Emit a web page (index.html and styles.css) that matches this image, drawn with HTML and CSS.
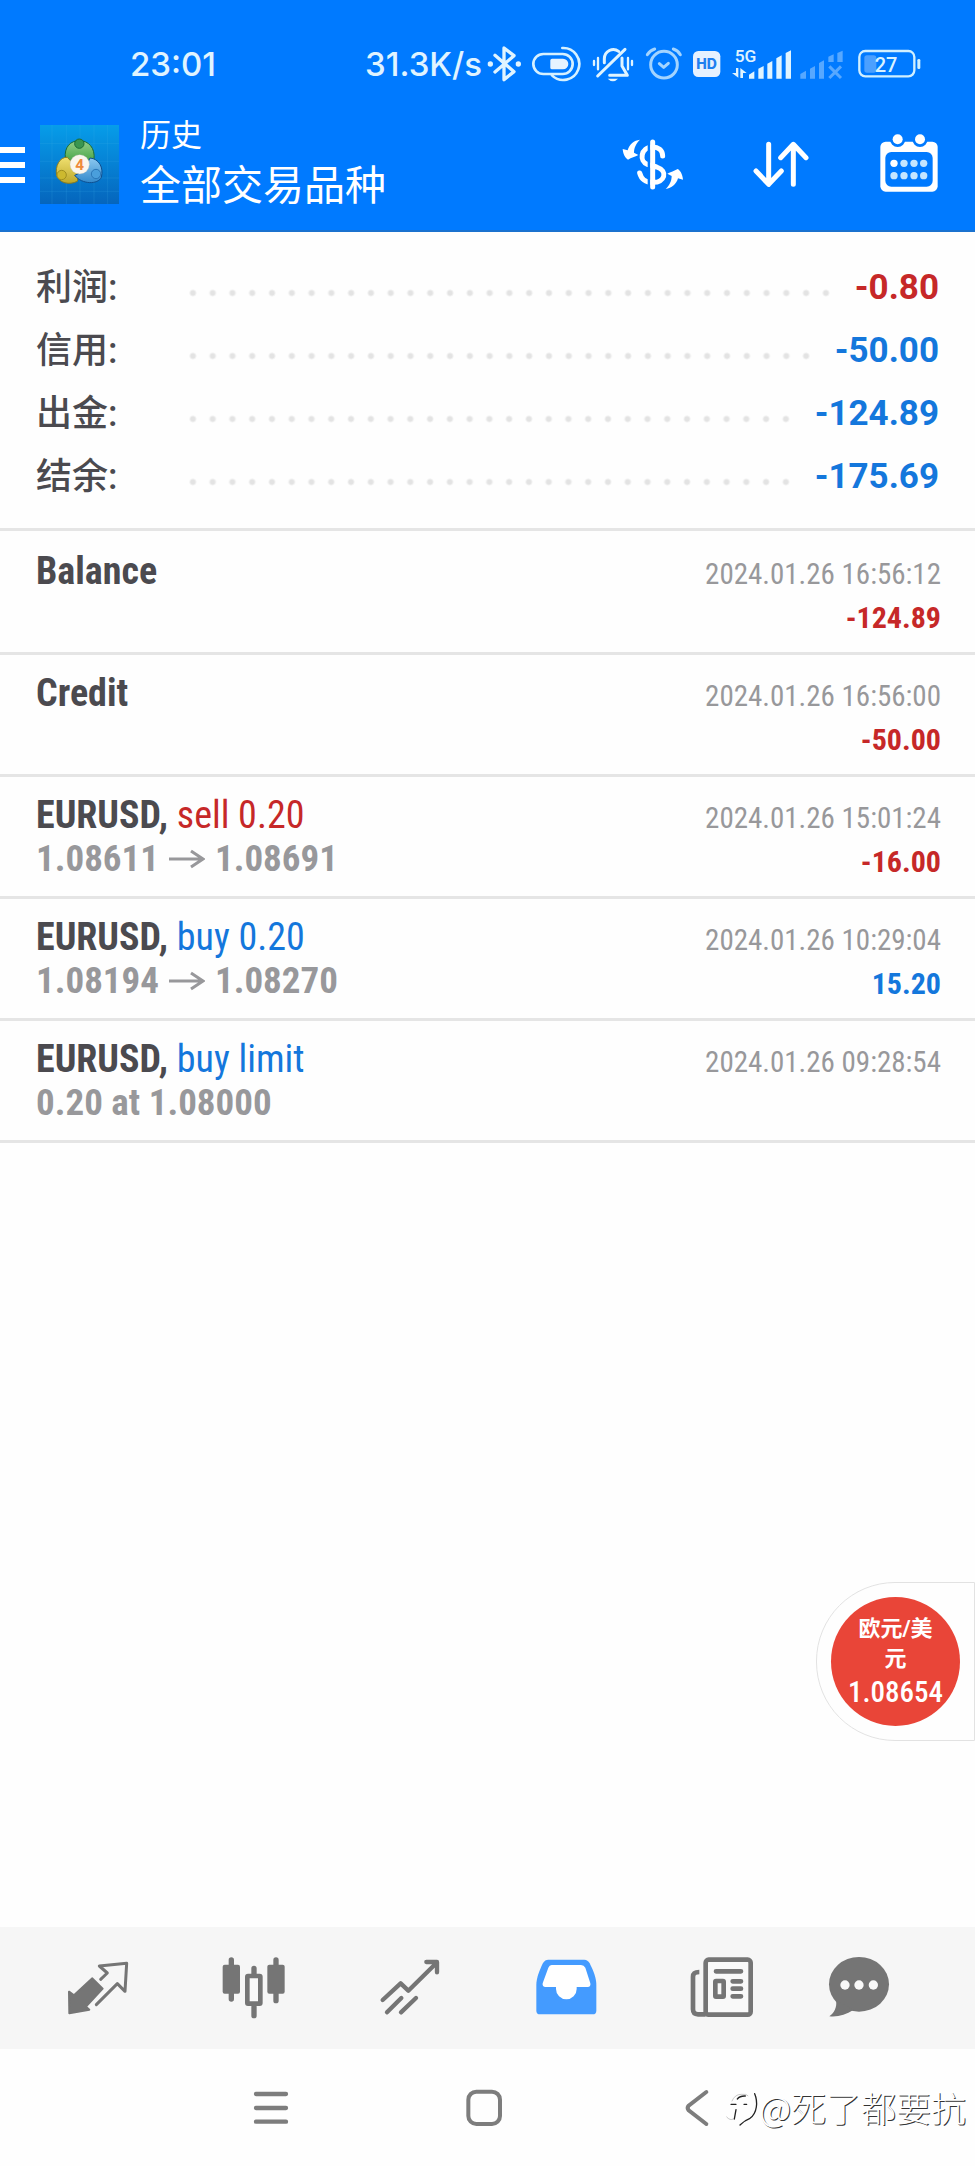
FILE: index.html
```html
<!DOCTYPE html>
<html lang="zh-CN">
<head>
<meta charset="utf-8">
<meta name="viewport" content="width=device-width, initial-scale=1">
<title>历史</title>
<link rel="stylesheet" href="styles.css">
</head>
<body>
<header class="header">
  <div class="status">
    <span class="status-text">23:01</span>
    <div class="status-right">
      <span class="status-text">31.3K/s</span>
      <div class="status-icons">
        <svg width="35" height="40" viewBox="6 70 105 120" fill="none" stroke="#e0f4ff" stroke-width="10" stroke-linejoin="round" stroke-linecap="round"><path d="M30 104L87 153L57 177V82L87 105L30 154"/><g fill="#e0f4ff" stroke="none"><circle cx="16" cy="130" r="8"/><circle cx="100" cy="130" r="8"/></g></svg>
        <svg width="51" height="40" viewBox="138 70 153 120" fill="none" stroke="#d6f1ff" stroke-width="8" stroke-linecap="round"><rect x="145" y="100" width="118" height="60" rx="30"/><path d="M232 82A48 48 0 1 1 201 164"/><path fill="#e6f3ff" stroke="none" d="M201 114H234A16 16 0 0 1 234 146H201Q196 146 196 141V119Q196 114 201 114Z"/></svg>
        <svg width="43" height="40" viewBox="318 70 129 120" fill="none" stroke="#e0f4ff" stroke-width="9" stroke-linecap="round" stroke-linejoin="round"><path d="M358 126V114A27 28 0 0 1 401 92M411 112V136L427 164H374M338 166L420 86"/><path stroke-width="7" d="M327 121V133M339 112V146M429 112V146M441 121V133"/><path fill="#e0f4ff" stroke="none" d="M368 174H399Q384 190 368 174Z"/></svg>
        <svg width="40" height="40" viewBox="474 70 120 120" fill="none" stroke="#a3d4ff" stroke-width="9" stroke-linecap="round" stroke-linejoin="round"><circle cx="537" cy="132" r="40"/><path d="M523 129L536 140L550 128M487 102Q496 89 509 85M565 85Q578 89 586 102"/></svg>
        <svg width="30" height="40" viewBox="621 70 90 120"><rect x="624" y="91" width="82" height="78" rx="16" fill="#e6f1ff"/><text class="hd-text" x="665" y="145" text-anchor="middle">HD</text></svg>
        <svg class="wide" width="60" height="40" viewBox="738 70 180 120" fill="#e0f4ff"><text class="net-text" x="749" y="125">5G</text><path d="M753 142H760V171L741 157H753ZM766 172V142L785 157H774V172ZM792 174V162L808 152V174ZM820 174V144L836 136V174ZM847 174V129L862 121V174ZM874 174V113L890 104V174ZM902 174V97L918 89V174Z"/></svg>
        <svg width="44" height="40" viewBox="945 70 132 120" fill="#57a8ff"><path d="M946 174V160L963 150V174ZM975 174V144L990 136V174ZM1002 174V127L1017 119V174ZM1030 124V108L1046 101V124ZM1057 124V97L1073 90V124Z"/><path stroke="#57a8ff" stroke-width="9" d="M1033 137L1068 172M1068 137L1033 172"/></svg>
        <svg width="69" height="40" viewBox="1104 70 207 120"><rect x="1138" y="104" width="36" height="52" rx="8" fill="#4ba0ff"/><rect x="1123" y="91" width="165" height="76" rx="18" fill="none" stroke="#d0efff" stroke-width="7"/><rect x="1297" y="115" width="9" height="30" rx="4" fill="#d0efff"/><text class="bat-text" x="1203" y="154" text-anchor="middle">27</text></svg>
      </div>
    </div>
  </div>
  <div class="appbar">
    <button class="menu" aria-label="菜单"><i></i><i></i><i></i></button>
    <svg class="logo" width="79" height="79" viewBox="30 27 237 237">
      <defs>
        <linearGradient id="sky" x1="0" y1="0" x2="0" y2="1"><stop offset="0" stop-color="#069de9"/><stop offset=".5" stop-color="#0681d4"/><stop offset="1" stop-color="#0565bc"/></linearGradient>
        <linearGradient id="gr" x1="0" y1="0" x2="0" y2="1"><stop offset="0" stop-color="#94cf8a"/><stop offset="1" stop-color="#3c9f3e"/></linearGradient>
        <linearGradient id="ye" x1="0" y1="0" x2="0" y2="1"><stop offset="0" stop-color="#f0e070"/><stop offset="1" stop-color="#bda82a"/></linearGradient>
        <linearGradient id="bl" x1="0" y1="0" x2="0" y2="1"><stop offset="0" stop-color="#8cc8f0"/><stop offset="1" stop-color="#3389cc"/></linearGradient>
      </defs>
      <rect x="30" y="27" width="237" height="237" fill="url(#sky)"/>
      <path d="M30 83H267M30 136H267M30 186H267M30 226H267M66 27V264M109 27V264M150 27V264M192 27V264M233 27V264" stroke="#4ab5ee" stroke-opacity=".25" stroke-width="2"/>
      <g stroke-width="3">
        <path d="M106 128C102 92 122 74 148 74C176 74 196 96 192 130L172 146L126 138Z" fill="url(#gr)" stroke="#1c6b32"/>
        <path d="M112 124C90 122 74 150 80 178C88 202 118 208 142 196L146 160Z" fill="url(#ye)" stroke="#8d7c1c"/>
        <path d="M180 126C206 128 222 154 214 184C204 206 156 206 134 178L160 166Z" fill="url(#bl)" stroke="#0f4f90"/>
        <circle cx="148" cy="83" r="14" fill="#3a9650" stroke="#1c6b32"/>
        <circle cx="95" cy="177" r="14" fill="#cdb92f" stroke="#a08f20"/>
        <circle cx="198" cy="174" r="14" fill="#4a9fdc" stroke="#2a76b8"/>
      </g>
      <circle cx="149" cy="145" r="29" fill="#fbf6ee" stroke="#bbb" stroke-width="1"/>
      <text class="logo-text" x="149" y="162" text-anchor="middle">4</text>
    </svg>
    <div class="titles">
      <h1 class="title">历史</h1>
      <p class="subtitle">全部交易品种</p>
    </div>
    <div class="actions">
      <button aria-label="货币"><svg width="64" height="64" viewBox="405 336 192 192"><path d="M530 405C530 386 516 378 500 378C462 378 460 422 484 430L512 438C548 450 536 486 500 484C476 484 466 474 461 456" fill="none" stroke="#fff" stroke-width="15" stroke-linecap="round"/><path d="M489 362V500" stroke="#007aff" stroke-width="8"/><path d="M500 363V498" stroke="#fff" stroke-width="15" stroke-linecap="round"/><path id="swing" d="M462 356C444 358 430 370 425 388L410 384C411 397 416 410 426 416C436 410 447 407 457 402L444 395C444 380 451 366 462 356Z" fill="#fff"/><use href="#swing" transform="rotate(180 500.5 430)"/></svg></button>
      <button aria-label="排序"><svg width="64" height="64" viewBox="791 336 192 192" fill="none" stroke="#fff" stroke-width="15" stroke-linecap="round" stroke-linejoin="round"><path d="M850 370V488M812 450L850 490L888 450M924 490V372M886 410L924 370L962 410"/></svg></button>
      <button aria-label="日期"><svg width="64" height="64" viewBox="1175 336 192 192"><rect x="1185" y="362" width="172" height="150" rx="16" fill="#fff"/><rect x="1200" y="393" width="142" height="104" rx="18" fill="#007aff"/><g fill="#007aff"><circle cx="1237" cy="355" r="23"/><circle cx="1304" cy="355" r="23"/></g><g fill="#fff"><circle cx="1237" cy="355" r="15"/><circle cx="1304" cy="355" r="15"/><circle cx="1226" cy="427" r="11"/></g><g fill="#c4e5ff"><circle cx="1256" cy="427" r="11"/><circle cx="1286" cy="427" r="11"/><circle cx="1315" cy="427" r="11"/><circle cx="1226" cy="464" r="11"/><circle cx="1256" cy="464" r="11"/><circle cx="1286" cy="464" r="11"/><circle cx="1315" cy="464" r="11"/></g></svg></button>
    </div>
  </div>
</header>

<main class="main">
  <dl class="summary">
    <div class="sum-row"><dt>利润:</dt><dd class="dots"></dd><dd class="sum-value red">-0.80</dd></div>
    <div class="sum-row"><dt>信用:</dt><dd class="dots"></dd><dd class="sum-value blue">-50.00</dd></div>
    <div class="sum-row"><dt>出金:</dt><dd class="dots"></dd><dd class="sum-value blue">-124.89</dd></div>
    <div class="sum-row"><dt>结余:</dt><dd class="dots"></dd><dd class="sum-value blue">-175.69</dd></div>
  </dl>
  <ul class="records">
    <li class="record">
      <div class="deal"><b>Balance</b></div>
      <div class="info"><time>2024.01.26 16:56:12</time><span class="amount red">-124.89</span></div>
    </li>
    <li class="record">
      <div class="deal"><b>Credit</b></div>
      <div class="info"><time>2024.01.26 16:56:00</time><span class="amount red">-50.00</span></div>
    </li>
    <li class="record">
      <div class="deal"><div><b>EURUSD,</b> <span class="red">sell 0.20</span></div><div class="price">1.08611 <svg class="arrow" width="36" height="20" viewBox="0 0 36 20"><path d="M0 10H33M22 2L34 10L22 18"/></svg> 1.08691</div></div>
      <div class="info"><time>2024.01.26 15:01:24</time><span class="amount red">-16.00</span></div>
    </li>
    <li class="record">
      <div class="deal"><div><b>EURUSD,</b> <span class="blue">buy 0.20</span></div><div class="price">1.08194 <svg class="arrow" width="36" height="20" viewBox="0 0 36 20"><path d="M0 10H33M22 2L34 10L22 18"/></svg> 1.08270</div></div>
      <div class="info"><time>2024.01.26 10:29:04</time><span class="amount blue">15.20</span></div>
    </li>
    <li class="record">
      <div class="deal"><div><b>EURUSD,</b> <span class="blue">buy limit</span></div><div class="price">0.20 at 1.08000</div></div>
      <div class="info"><time>2024.01.26 09:28:54</time></div>
    </li>
  </ul>
</main>

<aside class="float">
  <button class="quote"><span class="pair">欧元/美元</span><span class="rate">1.08654</span></button>
</aside>

<nav class="tabs">
  <button aria-label="行情"><svg width="64" height="64" viewBox="198 136 192 192" stroke="#757575" stroke-linejoin="round" stroke-linecap="round"><path fill="#757575" stroke-width="6" d="M277 203L308 234L258 288L268 297L208 308L207 243L222 254Z"/><path fill="none" stroke-width="9" d="M302 206L322 187L298 166L380 158L375 242L352 219L289 282"/></svg></button>
  <button aria-label="图表"><svg width="64" height="64" viewBox="666 136 192 192" fill="#757575" stroke="#757575" stroke-linecap="round"><path stroke-width="16" d="M694 148V265M828 148V270M762 173V190M762 288V315"/><rect x="668" y="162" width="52" height="87" rx="6" stroke="none"/><rect x="802" y="162" width="52" height="87" rx="6" stroke="none"/><rect x="742" y="196" width="39" height="83" rx="2" fill="#f9f9f9" stroke-width="14"/></svg></button>
  <button aria-label="交易"><svg width="64" height="64" viewBox="1134 136 192 192" fill="none" stroke="#757575" stroke-width="13" stroke-linecap="round" stroke-linejoin="round"><path d="M1148 268L1202 218L1225 240L1310 156M1279 154H1311V185M1161 305L1204 262M1203 305L1248 262"/></svg></button>
  <button aria-label="历史" aria-current="page"><svg width="64" height="64" viewBox="147 136 192 192"><path fill="#449bff" d="M190 147H298Q308 147 314 158C326 182 334 203 334 222V300Q334 311 323 311H165Q154 311 154 300V222C154 203 163 180 174 157Q180 147 190 147Z"/><path fill="#fff" d="M200 163H288Q297 163 301 171L316 218Q318 229 308 229H275V235A31 31 0 0 1 213 235V229H182Q171 229 173 218L190 171Q193 163 200 163Z"/></svg></button>
  <button aria-label="新闻"><svg width="64" height="64" viewBox="618 136 192 192" fill="none" stroke="#757575" stroke-width="14" stroke-linecap="round"><rect x="665" y="147" width="135" height="165" rx="9" fill="#f9f9f9"/><path stroke-linecap="butt" d="M646 184Q627 184 627 198V296Q627 311 642 311H665"/><path d="M696 182H771M746 212H771M746 234H771M746 257H771"/><rect x="694" y="211" width="25" height="47" rx="2"/></svg></button>
  <button aria-label="消息"><svg width="64" height="64" viewBox="1029 136 192 192" fill="#757575"><ellipse cx="1125" cy="221" rx="90" ry="82"/><path d="M1056 268C1060 290 1050 308 1036 317C1062 320 1085 312 1108 298Z"/><g fill="#f9f9f9"><circle cx="1083" cy="223" r="14"/><circle cx="1125" cy="223" r="14"/><circle cx="1168" cy="223" r="14"/></g></svg></button>
</nav>

<footer class="sysnav">
  <button aria-label="最近任务"><svg width="48" height="48" viewBox="741 520 144 144" fill="none" stroke="#7d7d7d" stroke-width="13" stroke-linecap="round"><path d="M768 550H858M768 592H858M768 633H858"/></svg></button>
  <button aria-label="主页"><svg width="48" height="48" viewBox="1379 520 144 144" fill="none" stroke="#7d7d7d" stroke-width="12"><rect x="1404" y="543" width="95" height="97" rx="24"/></svg></button>
  <button aria-label="返回"><svg width="48" height="48" viewBox="562 520 144 144" fill="none" stroke="#7d7d7d" stroke-width="12" stroke-linecap="round"><path d="M662 544L609 585Q603 592 609 599L662 640"/></svg></button>
  <div class="mark">
    <svg width="35" height="40" viewBox="10 40 105 120" fill="none" stroke-linecap="round"><path stroke="#aaa" stroke-width="2" d="M18 130Q28 142 38 136M34 82Q42 62 62 62Q78 60 82 66"/><path stroke="#222" stroke-width="4" d="M31 92H46M70 92H78M41 136L46 108M50 76Q58 66 74 67M102 60C112 84 110 118 88 134Q72 140 58 154"/></svg>
    <span>@死了都要抗</span>
  </div>
</footer>
</body>
</html>
```
FILE: styles.css
```css
* { box-sizing: border-box; }

body {
  margin: 0;
  min-height: 100vh;
  display: flex;
  flex-direction: column;
  background: #fefefe;
  color: #4b4a4f;
  font-family: "Roboto", "Noto Sans CJK SC", sans-serif;
}

button {
  display: flex;
  align-items: center;
  justify-content: center;
  padding: 0;
  border: 0;
  background: none;
  color: inherit;
  font: inherit;
}

svg { display: block; }

.red { color: #c62828; }
.blue { color: #1477dc; }

/* Header */
.header {
  background: #007aff;
  border-bottom: 2px solid #1a72cf;
  color: #fff;
}

.status {
  display: flex;
  align-items: center;
  justify-content: space-between;
  height: 99px;
  padding: 28px 53px 0 130px;
}

.status-text {
  font-family: "Inter", sans-serif;
  font-size: 33px;
  font-weight: 500;
  line-height: 40px;
  color: #e0f4ff;
}

.status-right { display: flex; align-items: center; gap: 5px; }
.status-icons { display: flex; align-items: center; gap: 9px; }
.wide { overflow: visible; }
.hd-text { font: 800 42px "Inter", sans-serif; fill: #1f7ff0; }
.net-text { font: 500 52px "Roboto", sans-serif; }
.bat-text { font: 500 60px "Roboto", sans-serif; fill: #d8f2ff; }
.logo-text { font: 700 46px "Roboto", sans-serif; fill: #ef8a3a; }

.appbar {
  display: flex;
  align-items: center;
  height: 131px;
  padding-right: 34px;
}

.menu {
  flex-direction: column;
  align-items: stretch;
  gap: 9px;
  width: 25px;
}

.menu i { height: 6px; background: #fff; }
.logo { margin-left: 15px; flex: none; }
.titles { margin-left: 21px; padding-top: 2px; }
.title, .subtitle { margin: 0; font-weight: 400; }
.title { font-size: 31px; line-height: 40px; }
.subtitle { font-size: 41px; line-height: 60px; }
.actions { display: flex; gap: 64px; margin-left: auto; }

/* Totals */
.summary {
  margin: 0;
  padding: 23px 36px 21px;
  border-bottom: 3px solid #e5e5e5;
}

.sum-row { display: flex; align-items: center; height: 63px; }
.sum-row dt { width: 147px; padding-bottom: 6px; font-size: 36px; font-weight: 500; }
.sum-row dd { margin: 0; }

.sum-row .dots {
  flex: 1;
  height: 20px;
  align-self: flex-end;
  margin-bottom: 15px;
  background: radial-gradient(circle at center, #e3e3e3 0 2px, transparent 4px) round;
  background-size: 20px 20px;
}

.sum-value {
  padding: 2px 0 0 19px;
  font-size: 35px;
  font-weight: 700;
}

/* Deal list */
.main { flex: 1; }
.records { margin: 0; padding: 2px 0 0; list-style: none; }

.record {
  display: flex;
  align-items: baseline;
  justify-content: space-between;
  height: 122px;
  padding: 16px 34px 0 36px;
  border-bottom: 3px solid #e5e5e5;
  font-family: "Roboto Condensed", "Liberation Sans Narrow", "Roboto", sans-serif;
  font-size: 38px;
  line-height: 44px;
}

.price { display: flex; align-items: center; gap: 10px; color: #98989b; font-size: 37px; font-weight: 700; }
.arrow { fill: none; stroke: #98989b; stroke-width: 3; }
.info { display: flex; flex-direction: column; align-items: flex-end; font-size: 29px; }
.info time { color: #98989b; }
.amount { font-size: 30px; font-weight: 700; }

/* Floating quote */
.float {
  position: fixed;
  right: 0;
  bottom: 425px;
  padding: 14px;
  border: 1px solid #e2e2e2;
  border-radius: 79px 0 0 79px;
  background: #fefefe;
}

.quote {
  flex-direction: column;
  width: 129px;
  height: 129px;
  border-radius: 50%;
  background: #e94538;
  color: #fff;
}

.pair { width: 80px; font-size: 22px; font-weight: 700; line-height: 30px; }
.rate { font-family: "Roboto Condensed", "Liberation Sans Narrow", "Roboto", sans-serif; font-size: 29px; font-weight: 500; line-height: 36px; }

/* Bottom bars */
.tabs {
  display: grid;
  grid-template-columns: repeat(5, 156fr) 118fr;
  height: 122px;
  padding: 0 57px 0 20px;
  background: #f6f6f6;
}

.sysnav {
  position: relative;
  display: grid;
  grid-template-columns: repeat(3, 1fr);
  height: 117px;
  padding: 0 172px 0 165px;
}

.mark {
  position: absolute;
  right: 9px;
  top: 34px;
  display: flex;
  align-items: center;
  color: #fff;
  font-family: "Noto Sans CJK SC", sans-serif;
  font-size: 35px;
  font-weight: 300;
  line-height: 48px;
  text-shadow: 1px 1px 0 #333;
}
```
